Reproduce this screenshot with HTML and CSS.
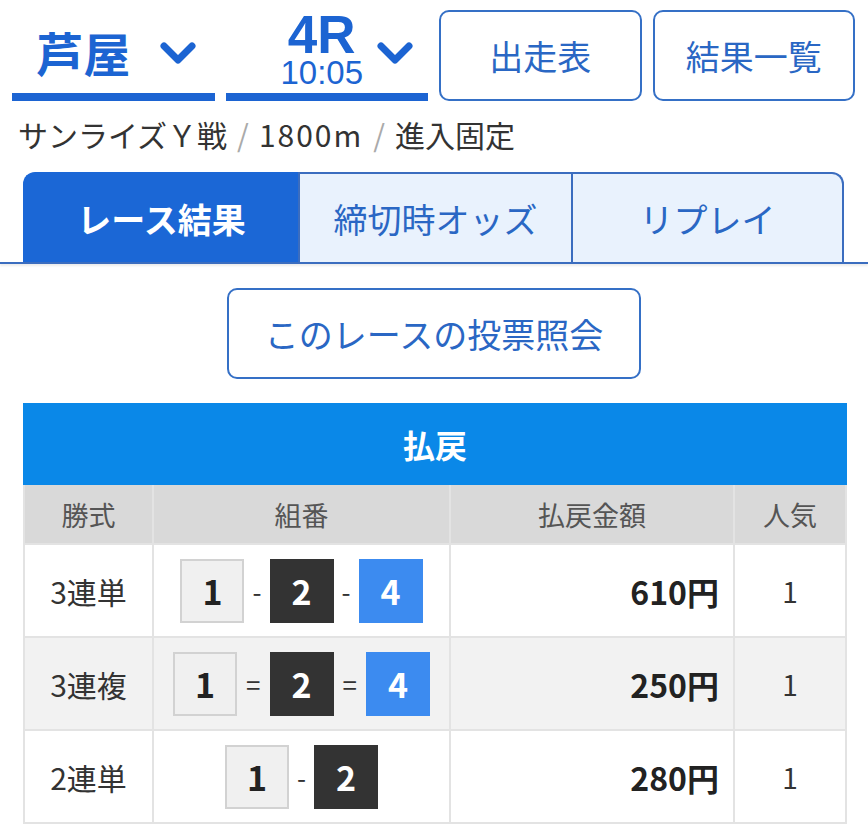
FILE: index.html
```html
<!DOCTYPE html>
<html lang="ja">
<head>
<meta charset="utf-8">
<title>芦屋 4R レース結果</title>
<link rel="stylesheet" href="styles.css">
</head>
<body>
<header class="top">
  <div class="select">
    <span class="select-label">芦屋</span>
    <svg class="chev" width="36" height="26" viewBox="0 0 36 26"><polyline points="4,5 18,19 32,5" fill="none" stroke="#1c64d2" stroke-width="7" stroke-linecap="round" stroke-linejoin="round"/></svg>
  </div>
  <div class="select select-race">
    <div class="race">
      <span class="race-no">4R</span>
      <span class="race-time">10:05</span>
    </div>
    <svg class="chev" width="36" height="26" viewBox="0 0 36 26"><polyline points="4,5 18,19 32,5" fill="none" stroke="#1c64d2" stroke-width="7" stroke-linecap="round" stroke-linejoin="round"/></svg>
  </div>
  <a class="btn">出走表</a>
  <a class="btn">結果一覧</a>
</header>

<p class="info">サンライズＹ戦<span class="sep">/</span><span class="latin">1800m</span><span class="sep">/</span>進入固定</p>

<nav class="tabs-wrap">
  <div class="tabs">
    <a class="tab active">レース結果</a>
    <a class="tab">締切時オッズ</a>
    <a class="tab last">リプレイ</a>
  </div>
</nav>

<div class="vote-row">
  <a class="vote-btn">このレースの投票照会</a>
</div>

<table class="pay">
  <colgroup>
    <col class="c1"><col class="c2"><col class="c3"><col class="c4">
  </colgroup>
  <thead>
    <tr><th colspan="4" class="cap">払戻</th></tr>
    <tr class="head"><th>勝式</th><th>組番</th><th>払戻金額</th><th>人気</th></tr>
  </thead>
  <tbody>
    <tr>
      <td class="kind">3連単</td>
      <td class="combo"><span class="box b1">1</span><span class="dash">-</span><span class="box b2">2</span><span class="dash">-</span><span class="box b4">4</span></td>
      <td class="amt">610円</td>
      <td class="pop">1</td>
    </tr>
    <tr class="alt">
      <td class="kind">3連複</td>
      <td class="combo"><span class="box b1">1</span><span class="eq">=</span><span class="box b2">2</span><span class="eq">=</span><span class="box b4">4</span></td>
      <td class="amt">250円</td>
      <td class="pop">1</td>
    </tr>
    <tr>
      <td class="kind">2連単</td>
      <td class="combo"><span class="box b1">1</span><span class="dash">-</span><span class="box b2">2</span></td>
      <td class="amt">280円</td>
      <td class="pop">1</td>
    </tr>
  </tbody>
</table>
</body>
</html>
```

FILE: styles.css
```css
* { box-sizing: border-box; }
html, body { margin: 0; padding: 0; background: #fff; }
body {
  font-family: "Noto Sans CJK JP", "Noto Sans", sans-serif;
  color: #333;
  width: 868px;
  overflow: hidden;
}
a { text-decoration: none; }

.top {
  display: grid;
  grid-template-columns: repeat(4, 1fr);
  column-gap: 11px;
  padding: 10px 13px 0 12px;
}
.select {
  height: 91px;
  border-bottom: 8px solid #1c64d2;
  display: flex;
  align-items: center;
  justify-content: center;
  gap: 30px;
  color: #1c64d2;
}
.select-label {
  font-size: 47px;
  font-weight: 700;
  line-height: 1;
  margin-left: 6px;
}
.chev { display: block; margin-top: 4px; }
.select-race { gap: 14px; padding-left: 40px; }
.race {
  display: flex;
  flex-direction: column;
  align-items: center;
  margin-top: -2px;
  font-family: "Liberation Sans", Arial, sans-serif;
}
.race-no {
  font-size: 53px;
  font-weight: 700;
  line-height: 44px;
  height: 44px;
}
.race-time {
  font-size: 33px;
  line-height: 30px;
  height: 30px;
  margin-top: 1px;
}
.btn {
  height: 91px;
  border: 2px solid #3570c6;
  border-radius: 10px;
  display: flex;
  align-items: center;
  justify-content: center;
  font-size: 34px;
  color: #2a67c4;
}

.info {
  margin: 13px 0 0 18px;
  font-size: 30px;
  line-height: 40px;
  color: #333;
}
.latin { letter-spacing: 2px; }
.sep { color: #aaa; margin: 0 10px; }

.tabs-wrap {
  margin-top: 18px;
  border-bottom: 2px solid #3b6dbf;
  box-shadow: 0 2px 2px rgba(0,0,0,0.08);
  padding: 0 24px 0 23px;
}
.tabs {
  display: grid;
  grid-template-columns: 275px 1fr 1fr;
  height: 90px;
}
.tab {
  display: flex;
  align-items: center;
  justify-content: center;
  font-size: 34px;
  color: #2a67c4;
  background: #e9f2fd;
  border-top: 2px solid #3b6dbf;
  border-left: 2px solid #3b6dbf;
}
.tab.active {
  background: #1b67d6;
  color: #fff;
  font-weight: 700;
  border-color: #1b67d6;
  border-radius: 12px 0 0 0;
}
.tab.last {
  border-right: 2px solid #3b6dbf;
  border-radius: 0 12px 0 0;
}

.vote-row {
  display: flex;
  justify-content: center;
  margin-top: 24px;
}
.vote-btn {
  width: 414px;
  height: 91px;
  border: 2px solid #3570c6;
  border-radius: 10px;
  display: flex;
  align-items: center;
  justify-content: center;
  font-size: 34px;
  color: #2a67c4;
}

.pay {
  margin: 24px 0 0 23px;
  width: 822px;
  border-collapse: collapse;
  table-layout: fixed;
}
.c1 { width: 129px; }
.c2 { width: 297px; }
.c3 { width: 284px; }
.c4 { width: 112px; }
.pay th, .pay td {
  border: 2px solid #e3e3e3;
  padding: 0;
  text-align: center;
}
.pay .cap {
  background: #0a88e8;
  border-color: #0a88e8;
  color: #fff;
  font-size: 32px;
  font-weight: 700;
  height: 80px;
}
.pay .head th {
  background: #d9d9d9;
  color: #555;
  font-weight: 400;
  font-size: 27px;
  height: 60px;
}
.pay tbody td {
  height: 93px;
  background: #fff;
}
.pay tbody tr.alt td { background: #f2f2f2; }
.kind { font-size: 30px; color: #333; }
.amt {
  text-align: right !important;
  padding-right: 14px !important;
  font-size: 32px;
  font-weight: 700;
  color: #222;
}
.pop { font-size: 28px; color: #333; }
.combo {
  font-size: 0;
}
.box {
  display: inline-flex;
  align-items: center;
  justify-content: center;
  width: 64px;
  height: 64px;
  vertical-align: middle;
  font-size: 34px;
  font-weight: 700;
}
.b1 { background: #f0f0f0; border: 2px solid #d2d2d2; color: #222; }
.b2 { background: #333; color: #fff; }
.b4 { background: #3c8bf0; color: #fff; }
.dash, .eq {
  display: inline-block;
  vertical-align: middle;
  font-size: 26px;
  color: #333;
  margin: 0 8px;
}
.eq { margin: 0 9px; }
```
